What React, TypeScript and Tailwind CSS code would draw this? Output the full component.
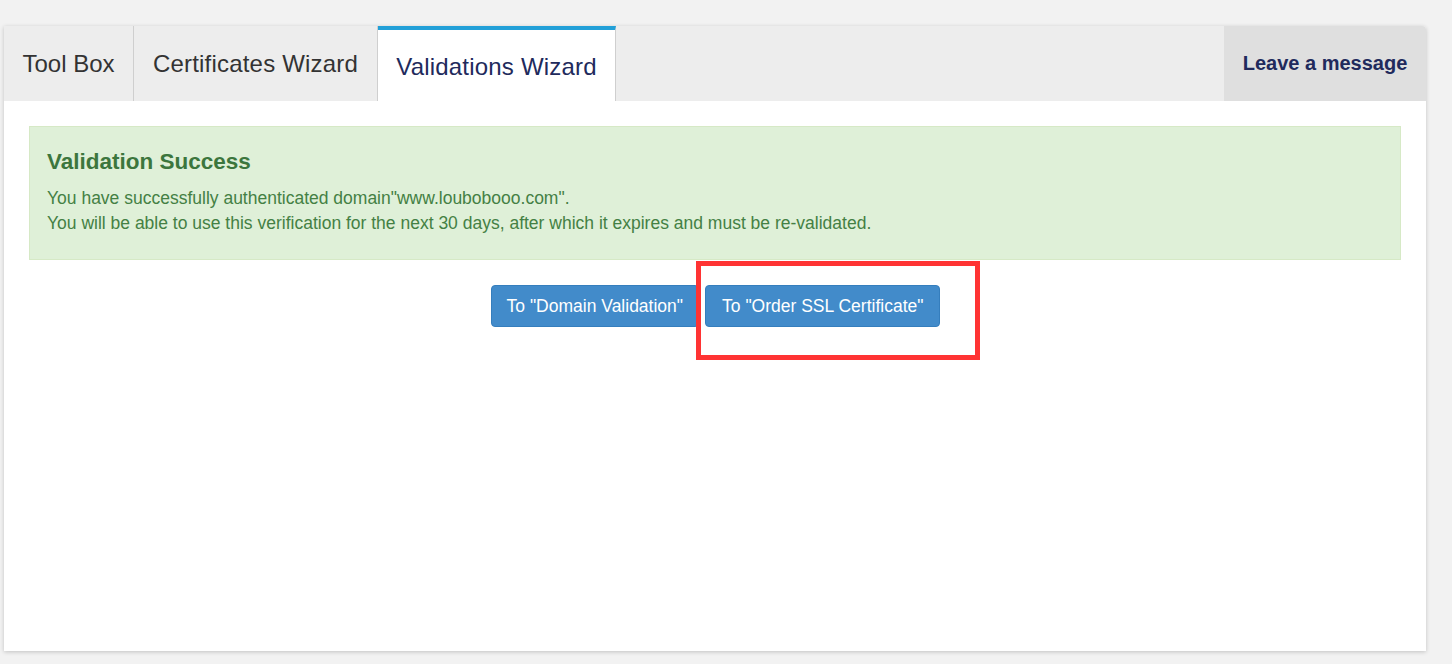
import React from "react";

export default function App() {
  return (
    <div className="w-[1452px] h-[664px] bg-[#f2f2f2] pt-[26px] pl-[4px] overflow-hidden" style={{ fontFamily: '"Liberation Sans", Arial, sans-serif' }}>
      <div className="w-[1422px] h-[625px] bg-white shadow-[0_1px_4px_rgba(0,0,0,0.2)] rounded-tr-[4px] flex flex-col">
        <div className="h-[75px] bg-[#ededed] flex rounded-tr-[4px]">
          <div className="w-[130px] border-r border-[#cfcfcf] flex items-center justify-center text-[24px] text-[#333]">
            Tool Box
          </div>
          <div className="w-[244px] border-r border-[#cfcfcf] flex items-center justify-center text-[24px] tracking-[0.2px] text-[#333]">
            Certificates Wizard
          </div>
          <div className="w-[238px] bg-white border-r border-[#cfcfcf] border-t-[4px] border-t-[#22a0d8] flex items-center justify-center pt-[2px] text-[24px] tracking-[0.2px] text-[#212a5c]">
            Validations Wizard
          </div>
          <div className="flex-1" />
          <div className="w-[202px] bg-[#dfdfdf] rounded-tr-[4px] flex items-center justify-center pb-[2px] font-bold text-[20px] text-[#212a5c]">
            Leave a message
          </div>
        </div>
        <div className="relative px-[25px] pt-[25px]">
          <div className="h-[134px] bg-[#dff0d8] border border-[#d6e9c6] text-[#3c763d] px-[17px] pt-[21px]">
            <div className="font-bold text-[22.5px] leading-[28px]">Validation Success</div>
            <div className="mt-[10px] text-[17.5px] leading-[25px] text-[#448044]">
              You have successfully authenticated domain"www.loubobooo.com".
              <br />
              You will be able to use this verification for the next 30 days, after which it expires and must be re-validated.
            </div>
          </div>
          <div className="flex justify-center gap-[6px] mt-[25px] pl-[1px]">
            <button className="h-[42px] px-[15px] bg-[#428bca] border border-[#357ebd] rounded-[4px] text-white text-[17.5px]">
              To "Domain Validation"
            </button>
            <button className="h-[42px] px-[16px] bg-[#428bca] border border-[#357ebd] rounded-[4px] text-white text-[17.5px]">
              To "Order SSL Certificate"
            </button>
          </div>
          <div className="absolute left-[692px] top-[160px] w-[284px] h-[99px] border-[5px] border-[#ff3333] pointer-events-none" />
        </div>
      </div>
    </div>
  );
}
